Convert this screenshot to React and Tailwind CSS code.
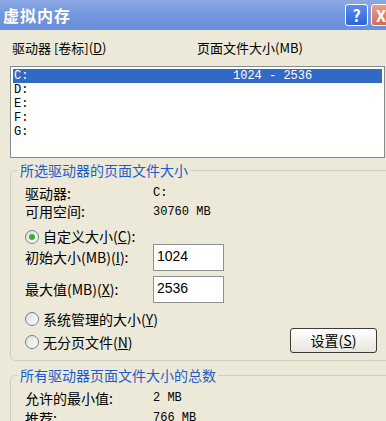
import React from "react";

const font = { fontFamily: '"Noto Sans CJK SC", "Liberation Sans", sans-serif' };

function Radio({ checked }) {
  return (
    <span className="w-[14px] h-[14px] rounded-full border border-[#6f8298] bg-linear-to-br from-[#dcdcd6] to-white flex items-center justify-center shrink-0">
      {checked && <span className="w-[6px] h-[6px] rounded-full bg-[#3fae2f]" />}
    </span>
  );
}

function Group({ label, children, className }) {
  return (
    <fieldset className={"ml-[10px] w-[400px] border border-[#d0d0bf] rounded-[5px] " + className}>
      <legend className="ml-[7px] px-[2px] text-[14px] leading-[14px] text-[#1f5bc6]">{label}</legend>
      {children}
    </fieldset>
  );
}

const mono = "font-['Liberation_Mono',monospace] text-[12px]";

export default function App() {
  return (
    <div style={font} className="w-[386px] h-[421px] overflow-hidden bg-[#ece9d8] text-black">
      {/* title bar */}
      <div className="h-[30px] flex items-center bg-linear-to-b from-[#8eaae6] via-[#7096dd] to-[#6a8fdc]">
        <span className="pl-[3px] text-white font-bold text-[16px] tracking-[1px]">虚拟内存</span>
        <div className="ml-auto flex items-center gap-[3px] mr-[-25px]">
          <div className="w-[23px] h-[22px] rounded-[3px] border border-white bg-linear-to-b from-[#5b8ef0] to-[#2f63d6] flex items-center justify-center text-white font-bold text-[16px] leading-none">?</div>
          <div className="w-[40px] h-[22px] rounded-[3px] border border-white bg-linear-to-b from-[#e8a08a] to-[#cf6d5a] flex items-center pl-[4px] text-white font-bold text-[16px] leading-none">X</div>
        </div>
      </div>

      {/* header */}
      <div className="mt-[11px] h-[14px] flex items-center text-[13px] leading-[14px]">
        <span className="pl-[12px] w-[197px]">驱动器 [卷标](<u>D</u>)</span>
        <span>页面文件大小(MB)</span>
      </div>

      {/* list */}
      <div className={"mt-[11px] ml-[10px] w-[375px] h-[92px] border border-[#858a8f] bg-white p-[2px] leading-[14px] " + mono}>
        <div className="h-[14px] flex bg-[#316ac5] text-white">
          <span className="pl-[1px] w-[220px]">C:</span>
          <span>1024 - 2536</span>
        </div>
        <div className="h-[14px] pl-[1px]">D:</div>
        <div className="h-[14px] pl-[1px]">E:</div>
        <div className="h-[14px] pl-[1px]">F:</div>
        <div className="h-[14px] pl-[1px]">G:</div>
      </div>

      {/* group 1 */}
      <Group label="所选驱动器的页面文件大小" className="mt-[5px]">
        <div className="pl-[14px] pt-[7px] pb-[7px] text-[14px]">
          <div className="h-[18px] flex items-center">
            <span className="w-[128px]">驱动器:</span>
            <span className={mono}>C:</span>
          </div>
          <div className="h-[19px] flex items-center">
            <span className="w-[128px]">可用空间:</span>
            <span className={mono}>30760 MB</span>
          </div>
          <div className="mt-[8px] h-[15px] flex items-center gap-[4px]">
            <Radio checked />
            <span>自定义大小(<u>C</u>):</span>
          </div>
          <div className="h-[27px] flex items-center">
            <span className="w-[128px]">初始大小(MB)(<u>I</u>):</span>
            <div className="w-[71px] h-[27px] border border-[#8f8f8f] bg-white pl-[3px] pt-[2px] text-[14px] leading-[18px] font-['Liberation_Sans',sans-serif]">1024</div>
          </div>
          <div className="mt-[5px] h-[27px] flex items-center">
            <span className="w-[128px]">最大值(MB)(<u>X</u>):</span>
            <div className="w-[71px] h-[27px] border border-[#8f8f8f] bg-white pl-[3px] pt-[2px] text-[14px] leading-[18px] font-['Liberation_Sans',sans-serif]">2536</div>
          </div>
          <div className="mt-[8px] h-[16px] flex items-center gap-[4px]">
            <Radio />
            <span>系统管理的大小(<u>Y</u>)</span>
          </div>
          <div className="mt-[1px] h-[25px] flex items-center">
            <div className="w-[265px] flex items-center gap-[4px] pt-[3px]">
              <Radio />
              <span>无分页文件(<u>N</u>)</span>
            </div>
            <div className="w-[87px] h-[25px] rounded-[3px] border border-[#3c3c3c] bg-linear-to-b from-white to-[#e6e5de] flex items-center justify-center">
              设置(<u>S</u>)
            </div>
          </div>
        </div>
      </Group>

      {/* group 2 */}
      <Group label="所有驱动器页面文件大小的总数" className="mt-[7px]">
        <div className="pl-[14px] pt-[8px] text-[14px]">
          <div className="h-[16px] flex items-center">
            <span className="w-[128px]">允许的最小值:</span>
            <span className={mono}>2 MB</span>
          </div>
          <div className="mt-[4px] h-[16px] flex items-center">
            <span className="w-[128px]">推荐:</span>
            <span className={mono}>766 MB</span>
          </div>
        </div>
      </Group>
    </div>
  );
}
